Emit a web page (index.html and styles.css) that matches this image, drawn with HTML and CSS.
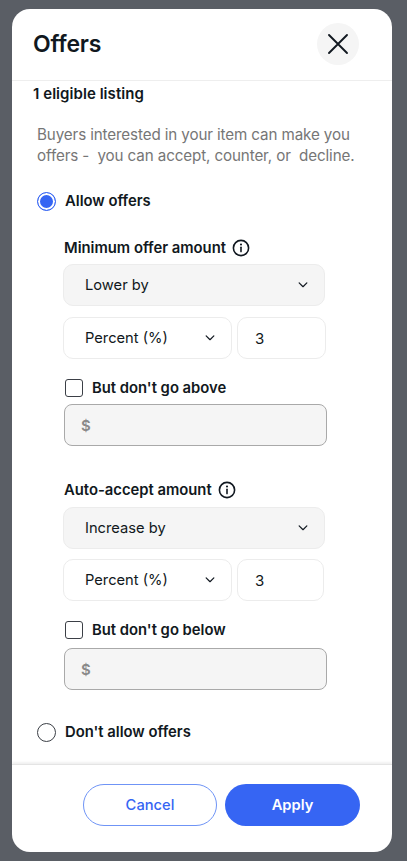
FILE: index.html
```html
<!DOCTYPE html>
<html lang="en">
<head>
<meta charset="utf-8">
<title>Offers</title>
<link rel="stylesheet" href="styles.css">
</head>
<body>
<main class="modal">
  <header class="modal-head">
    <h1 class="title">Offers</h1>
    <button class="close" aria-label="Close">
      <svg width="22" height="22" viewBox="0 0 22 22"><path d="M2 2 L20 20 M20 2 L2 20" fill="none" stroke="#111820" stroke-width="1.9" stroke-linecap="round"/></svg>
    </button>
  </header>
  <section class="modal-body">
    <p class="count">1 eligible listing</p>
    <p class="intro">Buyers interested in your item can make you offers -&nbsp; you can accept, counter, or&nbsp; decline.</p>

    <div class="radio-row allow">
      <span class="radio radio-on"></span>
      <span class="strong">Allow offers</span>
    </div>

    <div class="group">
      <div class="label strong">Minimum offer amount
        <svg class="info" width="18" height="18" viewBox="0 0 18 18"><circle cx="9" cy="9" r="7.6" fill="none" stroke="#111820" stroke-width="1.6"/><circle cx="9" cy="5.5" r="1.05" fill="#111820"/><path d="M9 8.2V12.6" stroke="#111820" stroke-width="1.6" stroke-linecap="round"/></svg>
      </div>
      <div class="select select-wide">
        <span>Lower by</span>
        <svg class="chev" width="10" height="6" viewBox="0 0 11 7"><path d="M1 1 L5.5 5.5 L10 1" fill="none" stroke="#111820" stroke-width="1.4" stroke-linecap="round" stroke-linejoin="round"/></svg>
      </div>
      <div class="pair">
        <div class="select select-unit">
          <span>Percent (%)</span>
          <svg class="chev" width="10" height="6" viewBox="0 0 11 7"><path d="M1 1 L5.5 5.5 L10 1" fill="none" stroke="#111820" stroke-width="1.4" stroke-linecap="round" stroke-linejoin="round"/></svg>
        </div>
        <div class="num">3</div>
      </div>
      <div class="check-row">
        <span class="check"></span>
        <span class="strong">But don't go above</span>
      </div>
      <div class="money"><span>$</span></div>
    </div>

    <div class="group group-second">
      <div class="label label-second strong">Auto-accept amount
        <svg class="info" width="18" height="18" viewBox="0 0 18 18"><circle cx="9" cy="9" r="7.6" fill="none" stroke="#111820" stroke-width="1.6"/><circle cx="9" cy="5.5" r="1.05" fill="#111820"/><path d="M9 8.2V12.6" stroke="#111820" stroke-width="1.6" stroke-linecap="round"/></svg>
      </div>
      <div class="select select-wide">
        <span>Increase by</span>
        <svg class="chev" width="10" height="6" viewBox="0 0 11 7"><path d="M1 1 L5.5 5.5 L10 1" fill="none" stroke="#111820" stroke-width="1.4" stroke-linecap="round" stroke-linejoin="round"/></svg>
      </div>
      <div class="pair pair-second">
        <div class="select select-unit">
          <span>Percent (%)</span>
          <svg class="chev" width="10" height="6" viewBox="0 0 11 7"><path d="M1 1 L5.5 5.5 L10 1" fill="none" stroke="#111820" stroke-width="1.4" stroke-linecap="round" stroke-linejoin="round"/></svg>
        </div>
        <div class="num num-short">3</div>
      </div>
      <div class="check-row">
        <span class="check"></span>
        <span class="strong">But don't go below</span>
      </div>
      <div class="money money-second"><span>$</span></div>
    </div>

    <div class="radio-row deny">
      <span class="radio"></span>
      <span class="strong">Don't allow offers</span>
    </div>
  </section>
  <footer class="modal-foot">
    <button class="btn btn-ghost">Cancel</button>
    <button class="btn btn-primary">Apply</button>
  </footer>
</main>
</body>
</html>
```
FILE: styles.css
```css
* { box-sizing: border-box; }
html, body { margin: 0; height: 100%; }
body {
  background: #5a5e65;
  padding: 9px 15px 9px 12px;
  font-family: Inter, "Open Sans", sans-serif;
  color: #111820;
  overflow: hidden;
}
.modal {
  width: 380px;
  height: 843px;
  background: #fff;
  border-radius: 18px;
  display: flex;
  flex-direction: column;
  overflow: hidden;
}
.modal-head {
  height: 72px;
  flex: none;
  padding: 14px 33px 0 21px;
  display: flex;
  justify-content: space-between;
  align-items: flex-start;
  border-bottom: 1px solid #eeeeee;
}
.title {
  margin: 5px 0 0;
  font-size: 23px;
  line-height: 32px;
  font-weight: 600;
  letter-spacing: -0.2px;
}
.close {
  width: 42px;
  height: 42px;
  margin: 0;
  padding: 0;
  border: 0;
  border-radius: 50%;
  background: #f5f5f5;
  display: flex;
  align-items: center;
  justify-content: center;
}
.modal-body { flex: 1; padding: 0 0 0 21px; }
.count {
  margin: 3px 0 0;
  font-size: 15px;
  line-height: 20px;
  font-weight: 600;
  letter-spacing: 0.05px;
}
.intro {
  margin: 20px 20px 0 4px;
  font-size: 15.2px;
  line-height: 21px;
  color: #767676;
  letter-spacing: -0.12px;
}
.strong { font-weight: 600; font-size: 14.8px; line-height: 20px; }
.radio-row { display: flex; align-items: center; gap: 9px; padding-left: 4px; }
.allow { margin-top: 25px; }
.deny { margin-top: 32px; }
.radio {
  width: 19px;
  height: 19px;
  border-radius: 50%;
  border: 1.5px solid #3b3f46;
  flex: none;
  background: #fff;
}
.radio-on {
  border-color: #3665f3;
  background: #3665f3;
  box-shadow: inset 0 0 0 2px #fff;
}
.group { margin: 0 0 0 30px; padding-top: 27px; }
.group-second { padding-top: 34px; }
.label { display: flex; align-items: center; gap: 6px; padding-left: 1px; margin-bottom: 6px; }
.label-second { margin-bottom: 7px; }
.info { flex: none; }
.select {
  height: 42px;
  border: 1px solid #ececec;
  border-radius: 10px;
  display: flex;
  align-items: center;
  justify-content: space-between;
  padding: 0 16px 0 21px;
  font-size: 14.7px;
}
.select-wide { width: 262px; background: #f5f5f5; }
.pair { display: flex; gap: 5px; margin-top: 11px; }
.pair-second { margin-top: 10px; }
.select-unit { width: 169px; background: #fff; padding-right: 16px; }
.num {
  width: 89px;
  height: 42px;
  border: 1px solid #ececec;
  border-radius: 10px;
  padding-left: 17px;
  display: flex;
  align-items: center;
  font-size: 15px;
}
.num-short { width: 87px; }
.check-row { display: flex; align-items: center; gap: 9px; margin: 19px 0 0 2px; height: 20px; }
.check {
  width: 18px;
  height: 18px;
  border: 1.3px solid #3b3f46;
  border-radius: 3px;
  background: #fff;
  flex: none;
}
.money {
  width: 263px;
  height: 42px;
  margin: 6px 0 0 1px;
  background: #f5f5f5;
  border: 1px solid #a9a9a9;
  border-radius: 8px;
  padding-left: 16px;
  display: flex;
  align-items: center;
  font-size: 15px;
  font-weight: 600;
  color: #8a8a8a;
}
.money-second { margin-top: 8px; }
.modal-foot {
  height: 88px;
  flex: none;
  padding: 19px 32px 0 71px;
  display: flex;
  gap: 8px;
  align-items: flex-start;
  border-top: 1px solid #e4e4e4;
  box-shadow: 0 -2px 2px rgba(0, 0, 0, 0.06);
}
.btn {
  width: 134px;
  height: 42px;
  padding: 0;
  border-radius: 21px;
  font-family: inherit;
  font-size: 14.7px;
  font-weight: 600;
}
.btn-ghost { background: #fff; color: #3665f3; border: 1px solid #6f94f6; font-weight: 500; }
.btn-primary { width: 135px; background: #3665f3; color: #fff; border: 0; }
```
